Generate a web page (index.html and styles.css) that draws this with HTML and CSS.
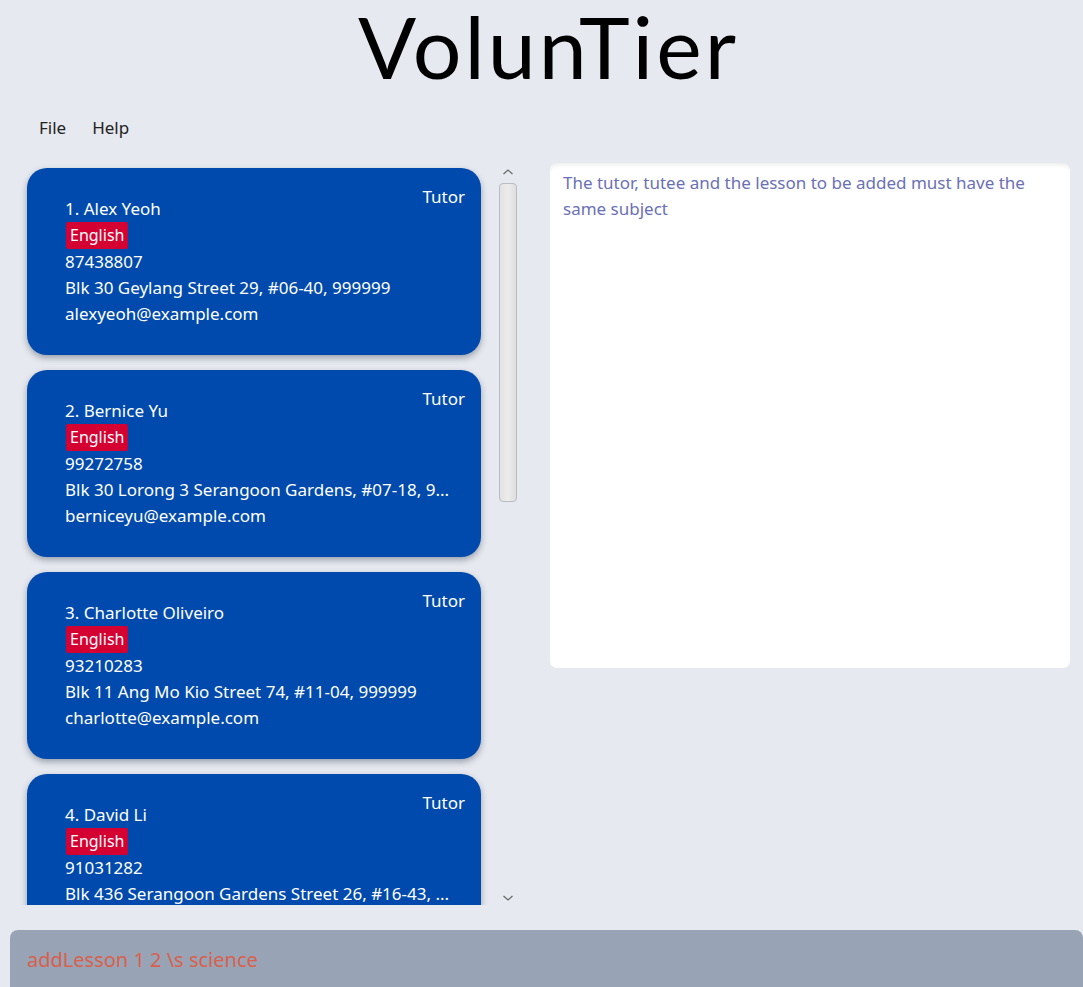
FILE: index.html
```html
<!DOCTYPE html>
<html>
<head>
<meta charset="utf-8">
<link rel="stylesheet" href="styles.css">
</head>
<body>
<div class="app">
  <h1 class="title">VolunTier</h1>
  <nav class="menu">
    <span class="menu-item">File</span>
    <span class="menu-item">Help</span>
  </nav>
  <main class="main">
    <section class="list-pane">
      <div class="list">
        <div class="card">
          <div class="card-body">
            <div class="line">1. Alex Yeoh</div>
            <div class="tags"><span class="tag">English</span></div>
            <div class="line">87438807</div>
            <div class="line">Blk 30 Geylang Street 29, #06-40, 999999</div>
            <div class="line">alexyeoh@example.com</div>
          </div>
          <div class="role">Tutor</div>
        </div>
        <div class="card">
          <div class="card-body">
            <div class="line">2. Bernice Yu</div>
            <div class="tags"><span class="tag">English</span></div>
            <div class="line">99272758</div>
            <div class="line">Blk 30 Lorong 3 Serangoon Gardens, #07-18, 9...</div>
            <div class="line">berniceyu@example.com</div>
          </div>
          <div class="role">Tutor</div>
        </div>
        <div class="card">
          <div class="card-body">
            <div class="line">3. Charlotte Oliveiro</div>
            <div class="tags"><span class="tag">English</span></div>
            <div class="line">93210283</div>
            <div class="line">Blk 11 Ang Mo Kio Street 74, #11-04, 999999</div>
            <div class="line">charlotte@example.com</div>
          </div>
          <div class="role">Tutor</div>
        </div>
        <div class="card">
          <div class="card-body">
            <div class="line">4. David Li</div>
            <div class="tags"><span class="tag">English</span></div>
            <div class="line">91031282</div>
            <div class="line">Blk 436 Serangoon Gardens Street 26, #16-43, ...</div>
            <div class="line">lidavid@example.com</div>
          </div>
          <div class="role">Tutor</div>
        </div>
      </div>
      <div class="scrollbar">
        <svg class="arrow" width="12" height="8" viewBox="0 0 12 8"><path d="M1.5 6 L6 2 L10.5 6" fill="none" stroke="#6b6b6b" stroke-width="1.3"/></svg>
        <div class="track"><div class="thumb"></div></div>
        <svg class="arrow" width="12" height="8" viewBox="0 0 12 8"><path d="M1.5 2 L6 6 L10.5 2" fill="none" stroke="#6b6b6b" stroke-width="1.3"/></svg>
      </div>
    </section>
    <section class="result-pane">
      <div class="result">The tutor, tutee and the lesson to be added must have the same subject</div>
    </section>
  </main>
  <div class="command">addLesson 1 2 \s science</div>
</div>
</body>
</html>
```

FILE: styles.css
```css
html, body {
  margin: 0;
  padding: 0;
}
body {
  background: #e6e9ef;
  font-family: "Noto Sans", "Open Sans", sans-serif;
  width: 1083px;
  height: 987px;
  overflow: hidden;
}
.app {
  display: flex;
  flex-direction: column;
}
.title {
  margin: 0;
  height: 106px;
  padding: 2px 0 0 14px;
  box-sizing: border-box;
  text-align: center;
  font-family: "Lato", sans-serif;
  font-weight: 400;
  font-size: 86px;
  line-height: 88px;
  color: #000;
  letter-spacing: 3px;
}
.menu {
  display: flex;
  gap: 26px;
  padding: 0 0 0 39px;
  height: 42px;
  align-items: center;
  font-size: 17px;
  color: #222;
}
.main {
  display: flex;
  height: 782px;
  padding-top: 15px;
  box-sizing: border-box;
}
.list-pane {
  display: flex;
  width: 520px;
  height: 742px;
}
.list {
  width: 466px;
  padding: 5px 0 0 27px;
  overflow: hidden;
  display: flex;
  flex-direction: column;
  gap: 15px;
}
.card {
  flex: none;
  width: 454px;
  height: 187px;
  box-sizing: border-box;
  background: #004aad;
  border-radius: 20px;
  box-shadow: 0 3px 6px rgba(60, 70, 90, 0.45);
  display: flex;
  justify-content: space-between;
  padding: 16px 16px 0 38px;
  color: #fff;
  font-size: 17px;
}
.card-body {
  padding-top: 12px;
  min-width: 0;
}
.line {
  line-height: 26px;
  height: 26px;
  white-space: nowrap;
}
.tags {
  height: 27px;
  display: flex;
  align-items: center;
}
.tag {
  background: #d50032;
  border-radius: 2px;
  padding: 0 4px 0 4px;
  line-height: 27px;
  height: 27px;
  margin-left: 1px;
  font-size: 16px;
}
.role {
  line-height: 26px;
  font-size: 17px;
}
.scrollbar {
  width: 20px;
  margin-left: 5px;
  display: flex;
  flex-direction: column;
  align-items: center;
}
.arrow {
  flex: none;
  margin: 5px 0 3px;
}
.track {
  flex: 1;
  width: 18px;
}
.thumb {
  width: 16px;
  height: 317px;
  margin-top: 4px;
  border: 1px solid #b9bcc0;
  border-radius: 4px;
  background: linear-gradient(to right, #e2e2e2, #ececec 50%, #dedede);
}
.result-pane {
  padding: 0 13px 0 30px;
  flex: 1;
}
.result {
  background: #fff;
  height: 505px;
  border-radius: 7px;
  box-sizing: border-box;
  padding: 7px 13px;
  font-size: 17px;
  line-height: 26px;
  color: #6b70b4;
  box-shadow: inset 0 5px 4px -3px rgba(0,0,0,0.08);
}
.command {
  margin-left: 10px;
  height: 57px;
  background: #98a4b5;
  border-radius: 8px 8px 0 0;
  padding: 16px 17px;
  box-sizing: border-box;
  font-size: 20px;
  color: #d8604c;
  line-height: 28px;
}
```
